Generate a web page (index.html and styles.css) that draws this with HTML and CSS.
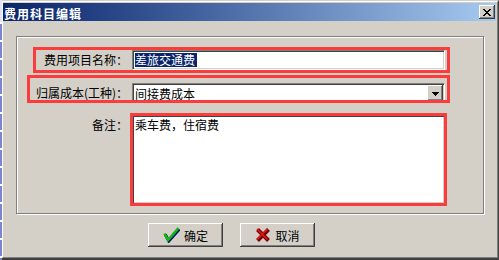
FILE: index.html
```html
<!DOCTYPE html>
<html lang="zh">
<head>
<meta charset="utf-8">
<title>费用科目编辑</title>
<link rel="stylesheet" href="styles.css">
</head>
<body>
<div class="screen">
  <div class="desk"></div>
  <div class="window">
    <div class="frame">
      <div class="titlebar">
        <span class="title">费用科目编辑</span>
        <span class="close">
          <svg width="8" height="7" viewBox="0 0 8 7" shape-rendering="crispEdges"><path fill="#000" d="M0 0h2v1h-2zM6 0h2v1h-2zM1 1h2v1h-2zM5 1h2v1h-2zM2 2h4v1h-4zM3 3h2v1h-2zM2 4h4v1h-4zM1 5h2v1h-2zM5 5h2v1h-2zM0 6h2v1h-2zM6 6h2v1h-2z"/></svg>
        </span>
      </div>
      <div class="body">
        <div class="group">
          <div class="row">
            <span class="lbl">费用项目名称：</span>
            <div class="field"><span class="sel">差旅交通费</span></div>
            <div class="mark mark-name"></div>
          </div>
          <div class="row row-gap">
            <span class="lbl">归属成本(工种)：</span>
            <div class="field combo">
              <span class="val">间接费成本</span>
              <span class="drop"><svg width="7" height="4" viewBox="0 0 7 4" shape-rendering="crispEdges"><path fill="#000" d="M0 0h7v1h-7zM1 1h5v1h-5zM2 2h3v1h-3zM3 3h1v1h-1z"/></svg></span>
            </div>
            <div class="mark mark-cat"></div>
          </div>
          <div class="row row-note">
            <span class="lbl lbl-top">备注：</span>
            <div class="field memo">乘车费，住宿费</div>
            <div class="mark mark-note"></div>
          </div>
        </div>
        <div class="actions">
          <button class="btn" type="button">
            <svg width="17" height="16" viewBox="0 0 17 16"><path d="M1.5 6.5 L5 13 L15.5 1.2" fill="none" stroke="#00106a" stroke-width="3" transform="translate(0.8 1)"/><path d="M1.5 6.5 L5 13 L15.5 1.2" fill="none" stroke="#14b814" stroke-width="2.6"/></svg>
            <span>确定</span>
          </button>
          <button class="btn" type="button">
            <svg width="16" height="16" viewBox="0 0 16 16"><path d="M2.5 2.5 Q7 7 13.5 13.5 M13.5 2.5 L2.5 13.5" fill="none" stroke="#7a0000" stroke-width="4"/><path d="M2 2 Q6.5 6.5 12.5 12.5 M12.5 2 L2 12.5" fill="none" stroke="#e01818" stroke-width="1.6"/></svg>
            <span>取消</span>
          </button>
        </div>
      </div>
    </div>
  </div>
</div>
</body>
</html>
```

FILE: styles.css
```css
* { box-sizing: border-box; }

html, body {
  margin: 0;
  padding: 0;
  background: #d4d0c8;
}

body {
  font-family: "Noto Sans CJK SC", "Noto Sans", "Liberation Sans", sans-serif;
  font-size: 12px;
  color: #000;
}

.screen {
  display: flex;
  width: 499px;
  height: 260px;
  overflow: hidden;
}

.desk {
  width: 2px;
  height: 260px;
  flex: none;
  background:
    linear-gradient(to bottom, #e4e4ee 0 22px, transparent 22px),
    repeating-linear-gradient(to bottom, #7c84d2 0 4px, #ffffff 4px 6px, #7c84d2 6px 18px);
}

.window {
  width: 497px;
  height: 260px;
  flex: none;
  border-top: 1px solid #d4d0c8;
  border-right: 1px solid #404040;
  border-bottom: 2px solid #404040;
}

.frame {
  height: 100%;
  display: flex;
  flex-direction: column;
  border-top: 1px solid #fff;
  border-left: 1px solid #fff;
  border-right: 1px solid #808080;
  border-bottom: 1px solid #808080;
  padding: 1px 1px 1px 0;
  background: #d4d0c8;
}

.titlebar {
  height: 18px;
  flex: none;
  display: flex;
  align-items: center;
  justify-content: space-between;
  padding: 0 1px 0 1px;
  background: linear-gradient(to right, #0a246a 0%, #3a5a98 35%, #a6caf0 100%);
}

.title {
  color: #fff;
  font-weight: bold;
  font-size: 12px;
  letter-spacing: 1px;
  line-height: 14px;
  padding-top: 3px;
}

.close {
  width: 16px;
  height: 14px;
  display: flex;
  align-items: center;
  justify-content: center;
  padding: 1px 0 0 0;
  background: #d4d0c8;
  box-shadow: inset -1px -1px #404040, inset 1px 1px #fff, inset -2px -2px #808080;
}

.body {
  flex: 1;
  padding: 15px 10px 0 13px;
}

.group {
  width: 468px;
  height: 178px;
  border: 1px solid #808080;
  box-shadow: inset 1px 1px #fff, 1px 1px #fff;
  padding-top: 13px;
}

.row {
  position: relative;
  display: flex;
  align-items: center;
}

.row-gap { margin-top: 13px; }

.row-note {
  margin-top: 12px;
  align-items: flex-start;
}

.lbl {
  width: 115px;
  flex: none;
  text-align: right;
  padding-right: 4px;
  line-height: 14px;
  white-space: nowrap;
}

.lbl-top { padding-top: 3px; }

.field {
  width: 313px;
  height: 20px;
  flex: none;
  background: #fff;
  border: 1px solid;
  border-color: #808080 #fff #fff #808080;
  box-shadow: inset 1px 1px #404040, inset -1px -1px #d4d0c8;
  padding: 1px 1px 0 2px;
  line-height: 14px;
  white-space: nowrap;
}

.sel {
  display: inline-block;
  margin-top: 1px;
  padding-right: 2px;
  background: #0a246a;
  color: #fff;
  line-height: 14px;
}

.combo {
  display: flex;
  align-items: center;
  padding: 1px 1px 1px 2px;
}

.val { line-height: 14px; padding-top: 1px; }

.drop {
  margin-left: auto;
  width: 16px;
  height: 16px;
  display: flex;
  align-items: center;
  justify-content: center;
  padding-top: 1px;
  background: #d4d0c8;
  box-shadow: inset -1px -1px #404040, inset 1px 1px #fff, inset -2px -2px #808080;
}

.memo {
  height: 89px;
  padding-top: 2px;
}

.mark {
  position: absolute;
  border: 3px solid #fa3c3c;
  pointer-events: none;
}

.mark-name { left: 16px; top: -3px; width: 417px; height: 26px; }
.mark-cat  { left: 10px; top: -8px; width: 423px; height: 28px; }
.mark-note { left: 113px; top: -2px; width: 317px; height: 93px; }

.actions {
  display: flex;
  gap: 17px;
  margin-top: 9px;
  padding-left: 132px;
}

.btn {
  width: 75px;
  height: 24px;
  border: 0;
  margin: 0;
  padding: 2px 0 0 0;
  display: flex;
  align-items: center;
  justify-content: center;
  gap: 4px;
  font: inherit;
  color: #000;
  line-height: 14px;
  background: #d4d0c8;
  box-shadow: inset -1px -1px #404040, inset 1px 1px #fff, inset -2px -2px #808080;
}

.btn svg { margin-top: -2px; }
```
